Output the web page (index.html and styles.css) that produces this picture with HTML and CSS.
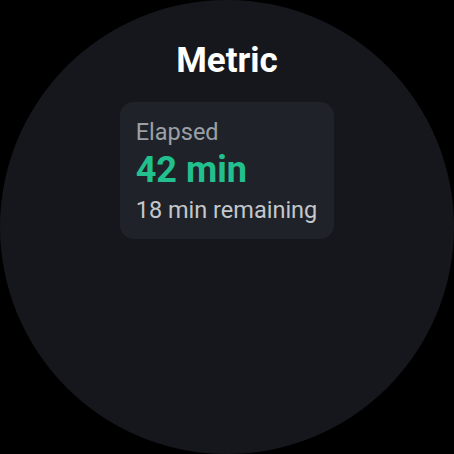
FILE: index.html
```html
<!DOCTYPE html>
<html>
<head>
<meta charset="utf-8">
<link rel="stylesheet" href="styles.css">
</head>
<body>
<div class="watch">
  <h1 class="title">Metric</h1>
  <div class="card">
    <div class="label">Elapsed</div>
    <div class="value">42 min</div>
    <div class="sub">18 min remaining</div>
  </div>
</div>
</body>
</html>
```
FILE: styles.css
```css
html, body {
  margin: 0;
  padding: 0;
  background: #000;
}
.watch {
  width: 454px;
  height: 454px;
  border-radius: 50%;
  background: #15171c;
  display: flex;
  flex-direction: column;
  align-items: center;
  font-family: Roboto, "Noto Sans", sans-serif;
  box-sizing: border-box;
  padding-top: 40px;
}
.title {
  margin: 0;
  font-size: 35px;
  font-weight: 700;
  color: #ffffff;
  line-height: 42px;
}
.card {
  margin-top: 20px;
  background: #1f2329;
  border-radius: 14px;
  padding: 16px 17px 13px 16px;
  display: flex;
  flex-direction: column;
}
.label {
  font-size: 23.5px;
  line-height: 28px;
  color: #9ba0a7;
}
.value {
  font-size: 36px;
  font-weight: 700;
  line-height: 48px;
  color: #22c08f;
}
.sub {
  font-size: 23.5px;
  line-height: 32px;
  color: #c4c7cc;
}
```
